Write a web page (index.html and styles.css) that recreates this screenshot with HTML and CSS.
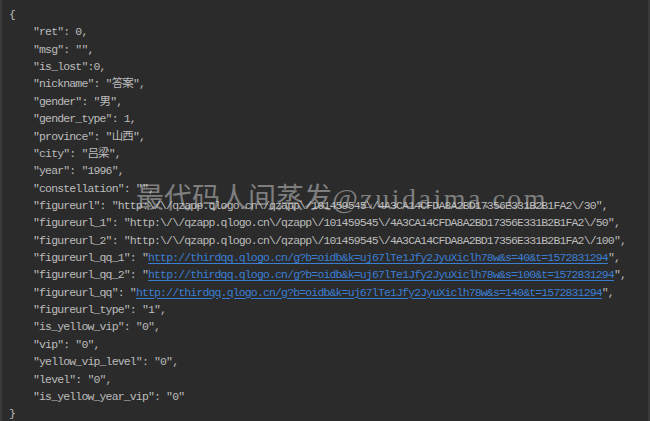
FILE: index.html
```html
<!DOCTYPE html>
<html>
<head>
<meta charset="utf-8">
<link rel="stylesheet" href="styles.css">
</head>
<body>
<div class="frame">
  <div class="code">
    <div class="ln">{</div>
    <div class="ln in">"ret": 0,</div>
    <div class="ln in">"msg": "",</div>
    <div class="ln in">"is_lost":0,</div>
    <div class="ln in">"nickname": "答案",</div>
    <div class="ln in">"gender": "男",</div>
    <div class="ln in">"gender_type": 1,</div>
    <div class="ln in">"province": "山西",</div>
    <div class="ln in">"city": "吕梁",</div>
    <div class="ln in">"year": "1996",</div>
    <div class="ln in">"constellation": "",</div>
    <div class="ln in">"figureurl": "http:\/\/qzapp.qlogo.cn\/qzapp\/101459545\/4A3CA14CFDA8A2BD17356E331B2B1FA2\/30",</div>
    <div class="ln in">"figureurl_1": "http:\/\/qzapp.qlogo.cn\/qzapp\/101459545\/4A3CA14CFDA8A2BD17356E331B2B1FA2\/50",</div>
    <div class="ln in">"figureurl_2": "http:\/\/qzapp.qlogo.cn\/qzapp\/101459545\/4A3CA14CFDA8A2BD17356E331B2B1FA2\/100",</div>
    <div class="ln in">"figureurl_qq_1": "<span class="link">http://thirdqq.qlogo.cn/g?b=oidb&amp;k=uj67lTe1Jfy2JyuXiclh78w&amp;s=40&amp;t=1572831294</span>",</div>
    <div class="ln in">"figureurl_qq_2": "<span class="link">http://thirdqq.qlogo.cn/g?b=oidb&amp;k=uj67lTe1Jfy2JyuXiclh78w&amp;s=100&amp;t=1572831294</span>",</div>
    <div class="ln in">"figureurl_qq": "<span class="link">http://thirdqq.qlogo.cn/g?b=oidb&amp;k=uj67lTe1Jfy2JyuXiclh78w&amp;s=140&amp;t=1572831294</span>",</div>
    <div class="ln in">"figureurl_type": "1",</div>
    <div class="ln in">"is_yellow_vip": "0",</div>
    <div class="ln in">"vip": "0",</div>
    <div class="ln in">"yellow_vip_level": "0",</div>
    <div class="ln in">"level": "0",</div>
    <div class="ln in">"is_yellow_year_vip": "0"</div>
    <div class="ln">}</div>
  </div>
  <div class="watermark">最代码人间蒸发<span class="wm-latin">@zuidaima.com</span></div>
</div>
</body>
</html>
```

FILE: styles.css
```css
html, body {
  margin: 0;
  padding: 0;
  background: #2b2b2b;
}
.frame {
  position: relative;
  width: 650px;
  height: 421px;
  box-sizing: border-box;
  background: #2b2b2b;
  border-left: 2px solid #3a3a3a;
  border-right: 2px solid #3a3a3a;
  overflow: hidden;
}
.code {
  padding: 6px 0 0 7px;
  font-family: "Liberation Mono", "Noto Sans CJK SC", monospace;
  font-size: 11.5px;
  letter-spacing: -0.85px;
  line-height: 17.37px;
  color: #bcbcbc;
}
.ln {
  white-space: pre;
  height: 17.37px;
}
.ln.in {
  padding-left: 24px;
}
.link {
  color: #3a7ed4;
  text-decoration: underline;
  text-underline-offset: 2px;
}
.watermark {
  position: absolute;
  left: 134px;
  top: 182px;
  font-family: "Liberation Serif", "Noto Sans CJK SC", serif;
  font-size: 28px;
  line-height: 34px;
  color: rgba(210, 210, 210, 0.5);
  white-space: nowrap;
}
.wm-latin {
  letter-spacing: 2.5px;
}
```
